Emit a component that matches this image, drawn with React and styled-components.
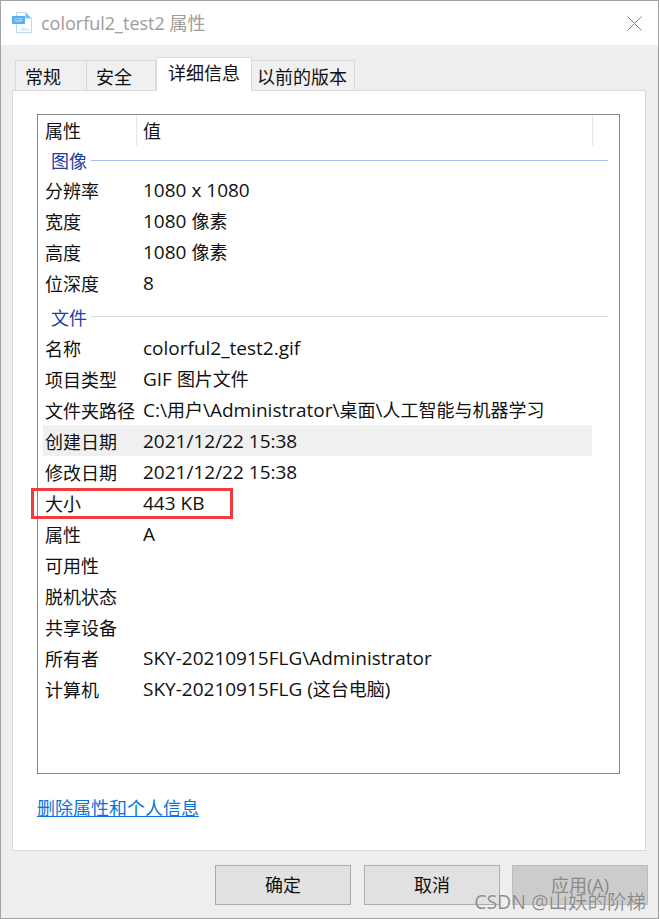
import React from 'react';
import styled, { createGlobalStyle } from 'styled-components';

const GlobalStyle = createGlobalStyle`
  html, body {
    margin: 0;
    padding: 0;
    background: #fff;
  }
  body {
    font-family: "Open Sans", "Noto Sans CJK SC", sans-serif;
    color: #111;
  }
`;

const Dialog = styled.div`
  position: relative;
  box-sizing: border-box;
  width: 659px;
  height: 919px;
  border: 1px solid #a4a4a4;
  background: #eeeeee;
  display: flex;
  flex-direction: column;
  overflow: hidden;
`;

const TitleBar = styled.div`
  height: 44px;
  background: #fff;
  display: flex;
  align-items: center;
  padding-left: 11px;
  flex-shrink: 0;
`;

const TitleText = styled.div`
  margin-left: 9px;
  padding-bottom: 2px;
  font-size: 18px;
  color: #a09c98;
`;

const CloseButton = styled.div`
  margin-left: auto;
  margin-right: 16px;
  width: 15px;
  height: 15px;
  display: flex;
`;

const Content = styled.div`
  padding: 0 11px;
  display: flex;
  flex-direction: column;
  flex: 1;
`;

const TabStrip = styled.div`
  display: flex;
  align-items: flex-end;
  height: 45px;
  padding-left: 3px;
  position: relative;
  z-index: 1;
`;

const Tab = styled.div`
  box-sizing: border-box;
  width: ${p => p.$width}px;
  height: ${p => (p.$active ? 34 : 30)}px;
  margin-bottom: ${p => (p.$active ? -1 : 0)}px;
  border: 1px solid #d9d9d9;
  border-left-width: ${p => (p.$first || p.$active ? 1 : 0)}px;
  border-bottom: none;
  background: ${p => (p.$active ? '#fff' : '#f0f0f0')};
  font-size: 18px;
  line-height: ${p => (p.$active ? 31 : 32)}px;
  padding-left: ${p => p.$pad}px;
  white-space: nowrap;
`;

const Panel = styled.div`
  box-sizing: border-box;
  width: 634px;
  height: 761px;
  background: #fff;
  border: 1px solid #d9d9d9;
  padding: 23px 0 0 24px;
  display: flex;
  flex-direction: column;
`;

const ListBox = styled.div`
  box-sizing: border-box;
  width: 583px;
  height: 660px;
  border: 1px solid #82878c;
  padding-left: 7px;
  flex-shrink: 0;
`;

const HeaderRow = styled.div`
  display: flex;
  height: 30px;
  margin-top: 1px;
  width: 547px;
  font-size: 18px;
  line-height: 30px;
  border-right: 1px solid #e5e5e5;
`;

const HeaderCell = styled.div`
  width: ${p => p.$width}px;
  flex-shrink: 0;
  padding-left: ${p => p.$pad}px;
  box-sizing: border-box;
  border-right: ${p => (p.$divider ? '1px solid #e5e5e5' : 'none')};
`;

const GroupRow = styled.div`
  display: flex;
  align-items: center;
  height: ${p => p.$height}px;
  padding-top: ${p => p.$offset}px;
  width: 563px;
  padding-left: 6px;
  box-sizing: border-box;
  font-size: 18px;
  color: #1a3fa8;
`;

const GroupRule = styled.div`
  flex: 1;
  height: 1px;
  margin-left: 4px;
  background: ${p => p.$color};
`;

const Row = styled.div`
  position: relative;
  display: flex;
  align-items: center;
  height: 31px;
  width: 549px;
  margin-left: -2px;
  padding-left: 2px;
  box-sizing: border-box;
  font-size: 18px;
  white-space: nowrap;
  background: ${p => (p.$selected ? '#f0f0f0' : 'transparent')};
`;

const RowLabel = styled.div`
  width: 98px;
  flex-shrink: 0;
`;

const RowValue = styled.div`
  flex: 1;
`;

const Latin = styled.span`
  font-size: 19px;
`;

const Highlight = styled.div`
  position: absolute;
  left: -12px;
  top: 1px;
  width: 202px;
  height: 31px;
  box-sizing: border-box;
  border: 3px solid #f23c3c;
`;

const RemoveLink = styled.a`
  margin-top: 22px;
  font-size: 18px;
  line-height: 24px;
  color: #0a74d8;
  text-decoration: underline;
  align-self: flex-start;
`;

const Footer = styled.div`
  display: flex;
  justify-content: flex-end;
  gap: 13px;
  margin-top: 14px;
  margin-right: -1px;
`;

const Button = styled.div`
  box-sizing: border-box;
  width: 136px;
  height: 40px;
  margin-left: ${p => (p.$disabled ? -1 : 0)}px;
  padding-bottom: 2px;
  border: 1px solid ${p => (p.$disabled ? '#bcbcbc' : '#adadad')};
  background: ${p => (p.$disabled ? '#cccccc' : '#e1e1e1')};
  color: ${p => (p.$disabled ? '#8a8a8a' : '#111')};
  font-size: 18px;
  display: flex;
  align-items: center;
  justify-content: center;
`;

const Watermark = styled.div`
  position: absolute;
  right: 12px;
  bottom: 3px;
  font-size: 19.5px;
  color: rgba(110, 110, 110, 0.78);
  text-shadow: 0 0 1px rgba(255, 255, 255, 0.8);
  white-space: nowrap;
`;

const FileIcon = () => (
  <svg width="20" height="22" viewBox="0 0 20 22">
    <path d="M4.5 0.5H13.5L19.5 6.5V20.5H4.5Z" fill="#fff" stroke="#b5daf5" />
    <path d="M13.5 0.5V6.5H19.5Z" fill="#7cc0f2" />
    <rect x="0" y="4" width="13" height="8" fill="#5aaef0" />
    <text x="2.5" y="10" fontSize="5" fontFamily="Liberation Sans, sans-serif" fill="#dff0fc">GIF</text>
    <path d="M7 19L11 14.5L14 17L15.5 15.5L18 19Z" fill="#dcedfa" />
  </svg>
);

const CloseIcon = () => (
  <svg width="15" height="15" viewBox="0 0 15 15">
    <path d="M0.5 0.5L14.5 14.5M14.5 0.5L0.5 14.5" stroke="#7c7c7c" strokeWidth="1" fill="none" />
  </svg>
);

// Latin runs sit a little larger than the CJK ones, as in the system UI font
const Mixed = ({ text }) =>
  text.split(/([\u4e00-\u9fff]+)/).map((part, i) =>
    i % 2 === 1 || !part ? part : <Latin key={i}>{part}</Latin>
  );

const groups = [
  {
    name: '图像',
    height: 28,
    offset: 0,
    ruleColor: '#a9bfe4',
    rows: [
      ['分辨率', '1080 x 1080'],
      ['宽度', '1080 像素'],
      ['高度', '1080 像素'],
      ['位深度', '8'],
    ],
  },
  {
    name: '文件',
    height: 34,
    offset: 3,
    ruleColor: '#d9d9d9',
    rows: [
      ['名称', 'colorful2_test2.gif'],
      ['项目类型', 'GIF 图片文件'],
      ['文件夹路径', 'C:\\用户\\Administrator\\桌面\\人工智能与机器学习'],
      ['创建日期', '2021/12/22 15:38', 'selected'],
      ['修改日期', '2021/12/22 15:38'],
      ['大小', '443 KB', 'marked'],
      ['属性', 'A'],
      ['可用性', ''],
      ['脱机状态', ''],
      ['共享设备', ''],
      ['所有者', 'SKY-20210915FLG\\Administrator'],
      ['计算机', 'SKY-20210915FLG (这台电脑)'],
    ],
  },
];

export default function App() {
  return (
    <>
      <GlobalStyle />
      <Dialog>
        <TitleBar>
          <FileIcon />
          <TitleText>colorful2_test2 属性</TitleText>
          <CloseButton>
            <CloseIcon />
          </CloseButton>
        </TitleBar>
        <Content>
          <TabStrip>
            <Tab $width={72} $pad={9} $first>常规</Tab>
            <Tab $width={69} $pad={9}>安全</Tab>
            <Tab $width={96} $pad={11} $active>详细信息</Tab>
            <Tab $width={103} $pad={5} $last>以前的版本</Tab>
          </TabStrip>
          <Panel>
            <ListBox>
              <HeaderRow>
                <HeaderCell $width={92} $divider>属性</HeaderCell>
                <HeaderCell $width={400} $pad={6}>值</HeaderCell>
              </HeaderRow>
              {groups.map(group => (
                <React.Fragment key={group.name}>
                  <GroupRow $height={group.height} $offset={group.offset}>
                    {group.name}
                    <GroupRule $color={group.ruleColor} />
                  </GroupRow>
                  {group.rows.map(([label, value, flag]) => (
                    <Row key={label} $selected={flag === 'selected'}>
                      <RowLabel>{label}</RowLabel>
                      <RowValue><Mixed text={value} /></RowValue>
                      {flag === 'marked' && <Highlight />}
                    </Row>
                  ))}
                </React.Fragment>
              ))}
            </ListBox>
            <RemoveLink>删除属性和个人信息</RemoveLink>
          </Panel>
          <Footer>
            <Button>确定</Button>
            <Button>取消</Button>
            <Button $disabled>应用(A)</Button>
          </Footer>
        </Content>
        <Watermark>CSDN @山妖的阶梯</Watermark>
      </Dialog>
    </>
  );
}
